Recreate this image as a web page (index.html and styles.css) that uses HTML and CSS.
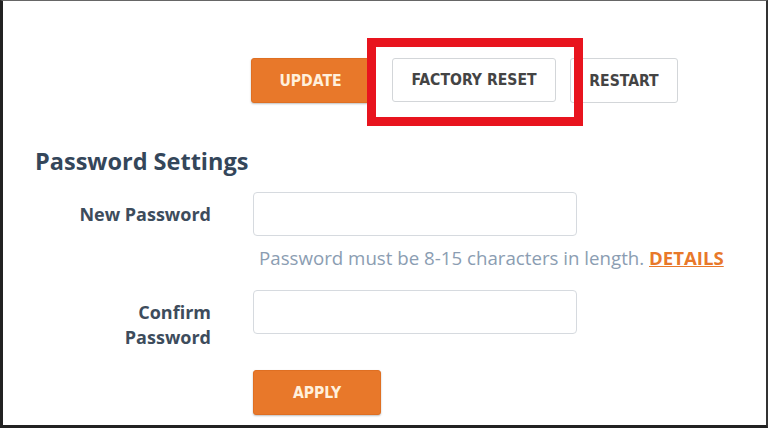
FILE: index.html
```html
<!DOCTYPE html>
<html lang="en">
<head>
  <meta charset="UTF-8" />
  <meta name="viewport" content="width=device-width, initial-scale=1.0" />
  <title>Settings</title>
  <link rel="stylesheet" href="styles.css">
</head>
<body>
  <div class="frame">
    <div class="actions">
      <button class="btn btn-primary btn-update">UPDATE</button>
      <span class="marked">
        <button class="btn btn-outline btn-reset">FACTORY RESET</button>
        <span class="mark"></span>
      </span>
      <button class="btn btn-outline btn-restart">RESTART</button>
    </div>

    <section class="password">
      <h2>Password Settings</h2>

      <div class="form-row form-row-new">
        <label for="newPass">New Password</label>
        <div class="field">
          <input type="password" id="newPass" />
          <p class="hint">Password must be 8-15 characters in length. <a href="#">DETAILS</a></p>
        </div>
      </div>

      <div class="form-row form-row-confirm">
        <label for="confirmPass">Confirm<br>Password</label>
        <div class="field">
          <input type="password" id="confirmPass" />
        </div>
      </div>

      <div class="form-row form-row-submit">
        <span></span>
        <div class="field">
          <button class="btn btn-primary btn-apply">APPLY</button>
        </div>
      </div>
    </section>
  </div>
</body>
</html>
```

FILE: styles.css
```css
html, body {
  margin: 0;
  padding: 0;
  background: #fff;
}
body {
  font-family: "Open Sans", "Noto Sans", sans-serif;
  color: #3b4a5a;
}
.frame {
  box-sizing: border-box;
  width: 768px;
  height: 428px;
  border-top: 1px solid #666;
  border-left: 3px solid #222;
  border-right: 2px solid #333;
  border-bottom: 3px solid #222;
  padding-top: 57px;
  overflow: hidden;
}

/* top buttons */
.actions {
  display: flex;
  align-items: flex-start;
  margin-left: 248px;
}
.btn {
  box-sizing: border-box;
  height: 45px;
  font-family: "DejaVu Sans Condensed", "Liberation Sans Narrow", "Liberation Sans", sans-serif;
  font-weight: bold;
  font-size: 15.6px;
  border-radius: 3px;
  cursor: pointer;
  padding: 0;
}
.btn-primary {
  background: #e8782a;
  border: 1px solid #df6f22;
  color: #fff0dc;
  box-shadow: 0 1px 2px rgba(0, 0, 0, 0.25);
}
.btn-outline {
  background: #fff;
  border: 1px solid #d3d6d9;
  color: #444;
}
.btn-update {
  width: 119px;
}
.marked {
  position: relative;
  display: inline-block;
  margin-left: 22px;
  height: 44px;
}
.btn-reset {
  width: 164px;
  height: 44px;
}
.mark {
  position: absolute;
  left: -25px;
  top: -20px;
  right: -27px;
  bottom: -24px;
  border: 9px solid #e8141e;
}
.btn-restart {
  width: 108px;
  margin-left: 14px;
}

/* password block */
.password {
  padding-left: 32px;
}
.password h2 {
  margin: 42px 0 0;
  font-size: 23.5px;
  line-height: 32px;
  font-weight: bold;
  color: #34465a;
}
.form-row {
  display: grid;
  grid-template-columns: 176px 324px;
  column-gap: 42px;
}
.form-row label {
  text-align: right;
  font-weight: bold;
  font-size: 18px;
  line-height: 25px;
  color: #3d4c5c;
}
.form-row-new {
  margin-top: 15px;
}
.form-row-new label {
  padding-top: 10px;
}
.field input {
  box-sizing: border-box;
  width: 324px;
  height: 44px;
  border: 1px solid #d6dadf;
  border-radius: 4px;
  margin: 0;
  display: block;
}
.hint {
  margin: 0;
  padding: 8px 0 0 6px;
  font-size: 18.7px;
  line-height: 28px;
  color: #8b9db2;
  white-space: nowrap;
}
.hint a {
  color: #e8782a;
  font-weight: bold;
  font-size: 18.6px;
  text-decoration: underline;
}
.form-row-confirm {
  margin-top: 18px;
}
.form-row-confirm label {
  padding-top: 10px;
}
.form-row-submit {
  margin-top: 20px;
}
.btn-apply {
  width: 128px;
}
```
